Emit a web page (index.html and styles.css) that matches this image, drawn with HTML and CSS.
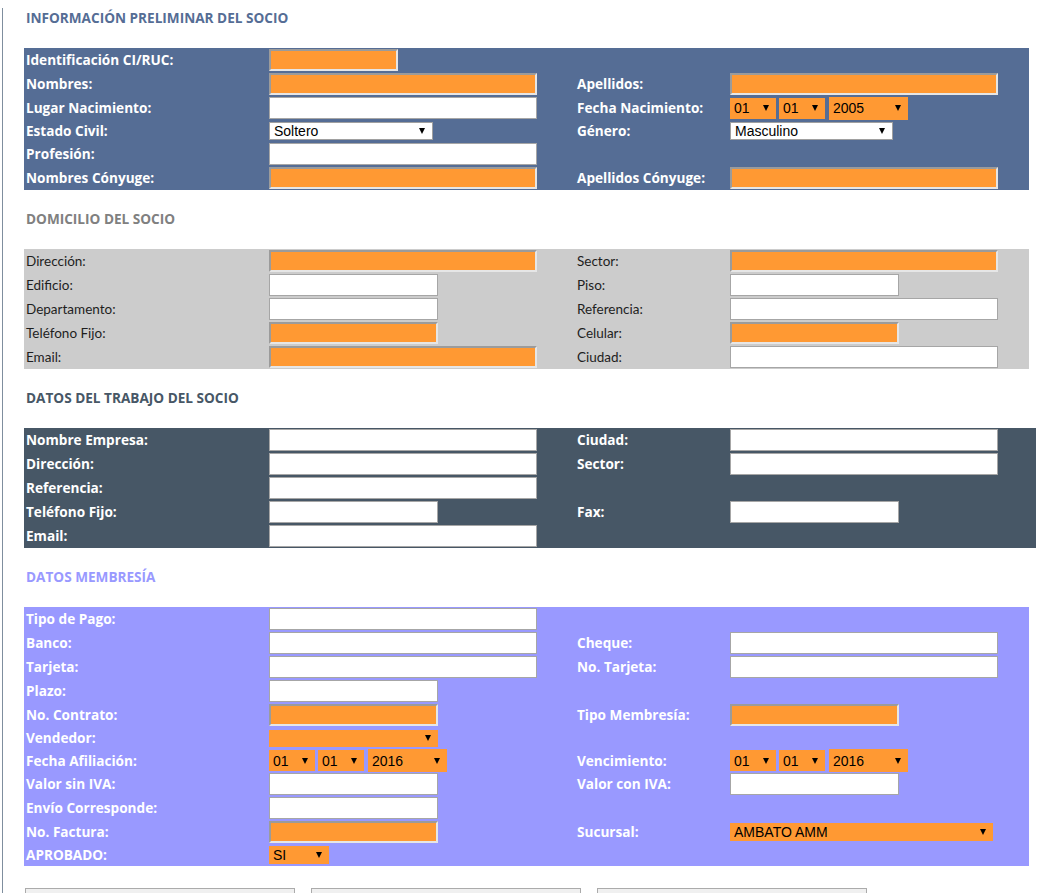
FILE: index.html
```html
<!DOCTYPE html>
<html lang="es">
<head>
<meta charset="utf-8">
<title>Socio</title>
<link rel="stylesheet" href="styles.css">
</head>
<body>
<div class="page">
  <h2 class="title t-blue first">INFORMACIÓN PRELIMINAR DEL SOCIO</h2>
  <div class="panel p-blue">
    <div class="row"><span class="lbl">Identificación CI/RUC:</span><span class="cell"><input class="in w-s req"></span><span></span><span></span></div>
    <div class="row"><span class="lbl">Nombres:</span><span class="cell"><input class="in w-l req"></span><span class="lbl">Apellidos:</span><span class="cell"><input class="in w-l req"></span></div>
    <div class="row"><span class="lbl">Lugar Nacimiento:</span><span class="cell"><input class="in w-l"></span><span class="lbl">Fecha Nacimiento:</span>
      <span class="cell dates"><span class="sel o d"><select><option>01</option></select></span><span class="sel o d"><select><option>01</option></select></span><span class="sel o y"><select><option>2005</option></select></span></span></div>
    <div class="row r-sel"><span class="lbl">Estado Civil:</span><span class="cell"><span class="sel wsel ec"><select><option>Soltero</option></select></span></span><span class="lbl">Género:</span><span class="cell"><span class="sel wsel gen"><select><option>Masculino</option></select></span></span></div>
    <div class="row"><span class="lbl">Profesión:</span><span class="cell"><input class="in w-l"></span><span></span><span></span></div>
    <div class="row"><span class="lbl">Nombres Cónyuge:</span><span class="cell"><input class="in w-l req"></span><span class="lbl">Apellidos Cónyuge:</span><span class="cell"><input class="in w-l req"></span></div>
  </div>

  <h2 class="title t-gray">DOMICILIO DEL SOCIO</h2>
  <div class="panel p-gray">
    <div class="row"><span class="lbl">Dirección:</span><span class="cell"><input class="in w-l req"></span><span class="lbl">Sector:</span><span class="cell"><input class="in w-l req"></span></div>
    <div class="row"><span class="lbl">Edificio:</span><span class="cell"><input class="in w-m"></span><span class="lbl">Piso:</span><span class="cell"><input class="in w-m"></span></div>
    <div class="row"><span class="lbl">Departamento:</span><span class="cell"><input class="in w-m"></span><span class="lbl">Referencia:</span><span class="cell"><input class="in w-l"></span></div>
    <div class="row"><span class="lbl">Teléfono Fijo:</span><span class="cell"><input class="in w-m req"></span><span class="lbl">Celular:</span><span class="cell"><input class="in w-m req"></span></div>
    <div class="row"><span class="lbl">Email:</span><span class="cell"><input class="in w-l req"></span><span class="lbl">Ciudad:</span><span class="cell"><input class="in w-l"></span></div>
  </div>

  <h2 class="title t-dark">DATOS DEL TRABAJO DEL SOCIO</h2>
  <div class="panel p-dark">
    <div class="row"><span class="lbl">Nombre Empresa:</span><span class="cell"><input class="in w-l"></span><span class="lbl">Ciudad:</span><span class="cell"><input class="in w-l"></span></div>
    <div class="row"><span class="lbl">Dirección:</span><span class="cell"><input class="in w-l"></span><span class="lbl">Sector:</span><span class="cell"><input class="in w-l"></span></div>
    <div class="row"><span class="lbl">Referencia:</span><span class="cell"><input class="in w-l"></span><span></span><span></span></div>
    <div class="row"><span class="lbl">Teléfono Fijo:</span><span class="cell"><input class="in w-m"></span><span class="lbl">Fax:</span><span class="cell"><input class="in w-m"></span></div>
    <div class="row"><span class="lbl">Email:</span><span class="cell"><input class="in w-l"></span><span></span><span></span></div>
  </div>

  <h2 class="title t-violet">DATOS MEMBRESÍA</h2>
  <div class="panel p-violet">
    <div class="row"><span class="lbl">Tipo de Pago:</span><span class="cell"><input class="in w-l"></span><span></span><span></span></div>
    <div class="row"><span class="lbl">Banco:</span><span class="cell"><input class="in w-l"></span><span class="lbl">Cheque:</span><span class="cell"><input class="in w-l"></span></div>
    <div class="row"><span class="lbl">Tarjeta:</span><span class="cell"><input class="in w-l"></span><span class="lbl">No. Tarjeta:</span><span class="cell"><input class="in w-l"></span></div>
    <div class="row"><span class="lbl">Plazo:</span><span class="cell"><input class="in w-m"></span><span></span><span></span></div>
    <div class="row"><span class="lbl">No. Contrato:</span><span class="cell"><input class="in w-m req"></span><span class="lbl">Tipo Membresía:</span><span class="cell"><input class="in w-m req"></span></div>
    <div class="row r-sel"><span class="lbl">Vendedor:</span><span class="cell"><span class="sel o vend"><select><option></option></select></span></span><span></span><span></span></div>
    <div class="row r-date"><span class="lbl">Fecha Afiliación:</span>
      <span class="cell dates"><span class="sel o d"><select><option>01</option></select></span><span class="sel o d"><select><option>01</option></select></span><span class="sel o y"><select><option>2016</option></select></span></span>
      <span class="lbl">Vencimiento:</span>
      <span class="cell dates"><span class="sel o d"><select><option>01</option></select></span><span class="sel o d"><select><option>01</option></select></span><span class="sel o y"><select><option>2016</option></select></span></span></div>
    <div class="row"><span class="lbl">Valor sin IVA:</span><span class="cell"><input class="in w-m"></span><span class="lbl">Valor con IVA:</span><span class="cell"><input class="in w-m"></span></div>
    <div class="row"><span class="lbl">Envío Corresponde:</span><span class="cell"><input class="in w-m"></span><span></span><span></span></div>
    <div class="row"><span class="lbl">No. Factura:</span><span class="cell"><input class="in w-m req"></span><span class="lbl">Sucursal:</span><span class="cell"><span class="sel o suc"><select><option>AMBATO AMM</option></select></span></span></div>
    <div class="row r-sel"><span class="lbl">APROBADO:</span><span class="cell"><span class="sel o si"><select><option>SI</option></select></span></span><span></span><span></span></div>
  </div>

  <div class="buttons">
    <button class="btn" aria-label="Guardar"></button>
    <button class="btn" aria-label="Imprimir"></button>
    <button class="btn" aria-label="Regresar"></button>
  </div>
</div>
</body>
</html>
```
FILE: styles.css
```css
html, body {
  margin: 0;
  padding: 0;
  background: #ffffff;
}
body {
  font-family: Lato, "Open Sans", sans-serif;
  font-size: 13px;
}
.page {
  margin-left: 2px;
  border-left: 1px solid #7f8e9e;
  padding-left: 21px;
  padding-bottom: 40px;
  min-height: 960px;
}
.title {
  margin: 19px 0 20px 0;
  padding-left: 2px;
  height: 20px;
  line-height: 20px;
  font-family: "Open Sans", Lato, sans-serif;
  font-size: 13.6px;
  font-weight: bold;
}
.title.first { margin-top: 8px; }
.t-blue { color: #556d95; }
.t-gray { color: #808080; }
.t-dark { color: #475766; }
.t-violet { color: #9999ff; }

.panel {
  width: 1005px;
  display: flex;
  flex-direction: column;
}
.p-blue, .p-dark, .p-violet {
  color: #ffffff;
  font-family: "Open Sans", Lato, sans-serif;
  font-weight: bold;
  font-size: 13.6px;
}
.p-blue { background: #556d95; }
.p-gray {
  background: #cccccc;
  color: #1e1e1e;
  font-family: Lato, "Open Sans", sans-serif;
  font-size: 13.5px;
}
.p-dark { background: #475766; width: 1012px; }
.p-violet { background: #9999ff; }

.row {
  display: grid;
  grid-template-columns: 244px 307px 154px 1fr;
  align-items: center;
  min-height: 24px;
}
.row.r-sel { min-height: 22px; }
.row.r-date { min-height: 23px; }
.lbl {
  padding-left: 2px;
  white-space: nowrap;
  line-height: 18px;
}
.cell {
  display: flex;
  align-items: center;
  padding-left: 1px;
}

.in {
  box-sizing: border-box;
  height: 22px;
  margin: 1px 0;
  padding: 0 3px;
  border: 1px solid #a6a6a6;
  background: #ffffff;
  font-family: "Liberation Sans", Arial, sans-serif;
  font-size: 14px;
}
.in.req {
  background: #ff9933;
  border-width: 2px;
  border-style: solid;
  border-color: #9b9b9b #e6e6e6 #e6e6e6 #9b9b9b;
}
.w-s { width: 129px; }
.w-m { width: 169px; }
.w-l { width: 268px; }

.dates {
  gap: 3px;
}
.dates .y { margin-left: 1px; }

.sel {
  position: relative;
  display: inline-flex;
}
.sel select {
  -webkit-appearance: none;
  appearance: none;
  box-sizing: border-box;
  margin: 0;
  padding: 0 0 0 4px;
  border: 0;
  border-radius: 0;
  font-family: "Liberation Sans", Arial, sans-serif;
  font-size: 14px;
  font-weight: normal;
  color: #000000;
  width: 100%;
  height: 100%;
  outline: none;
}
.sel::after {
  content: "";
  position: absolute;
  right: 7px;
  top: 50%;
  margin-top: -3px;
  width: 0;
  height: 0;
  border-left: 3.5px solid transparent;
  border-right: 3.5px solid transparent;
  border-top: 6px solid #000000;
  pointer-events: none;
}
.sel.o select { background: #ff9933; }
.sel.wsel select {
  background: #ffffff;
  border: 1px solid #a0a0a0;
  padding-left: 4px;
}
.sel.wsel::after { right: 8px; }
.ec { width: 164px; height: 18px; }
.gen { width: 163px; height: 18px; }
.d { width: 46px; height: 21px; }
.y { width: 79px; height: 23px; }
.vend { width: 169px; height: 17px; }
.suc { width: 263px; height: 18px; }
.si { width: 60px; height: 18px; }

.buttons {
  display: flex;
  gap: 16px;
  margin-top: 22px;
  padding-left: 1px;
}
.btn {
  box-sizing: border-box;
  width: 270px;
  height: 30px;
  margin: 0;
  border: 1px solid #ababab;
  background: #f0f0f0;
}
```
